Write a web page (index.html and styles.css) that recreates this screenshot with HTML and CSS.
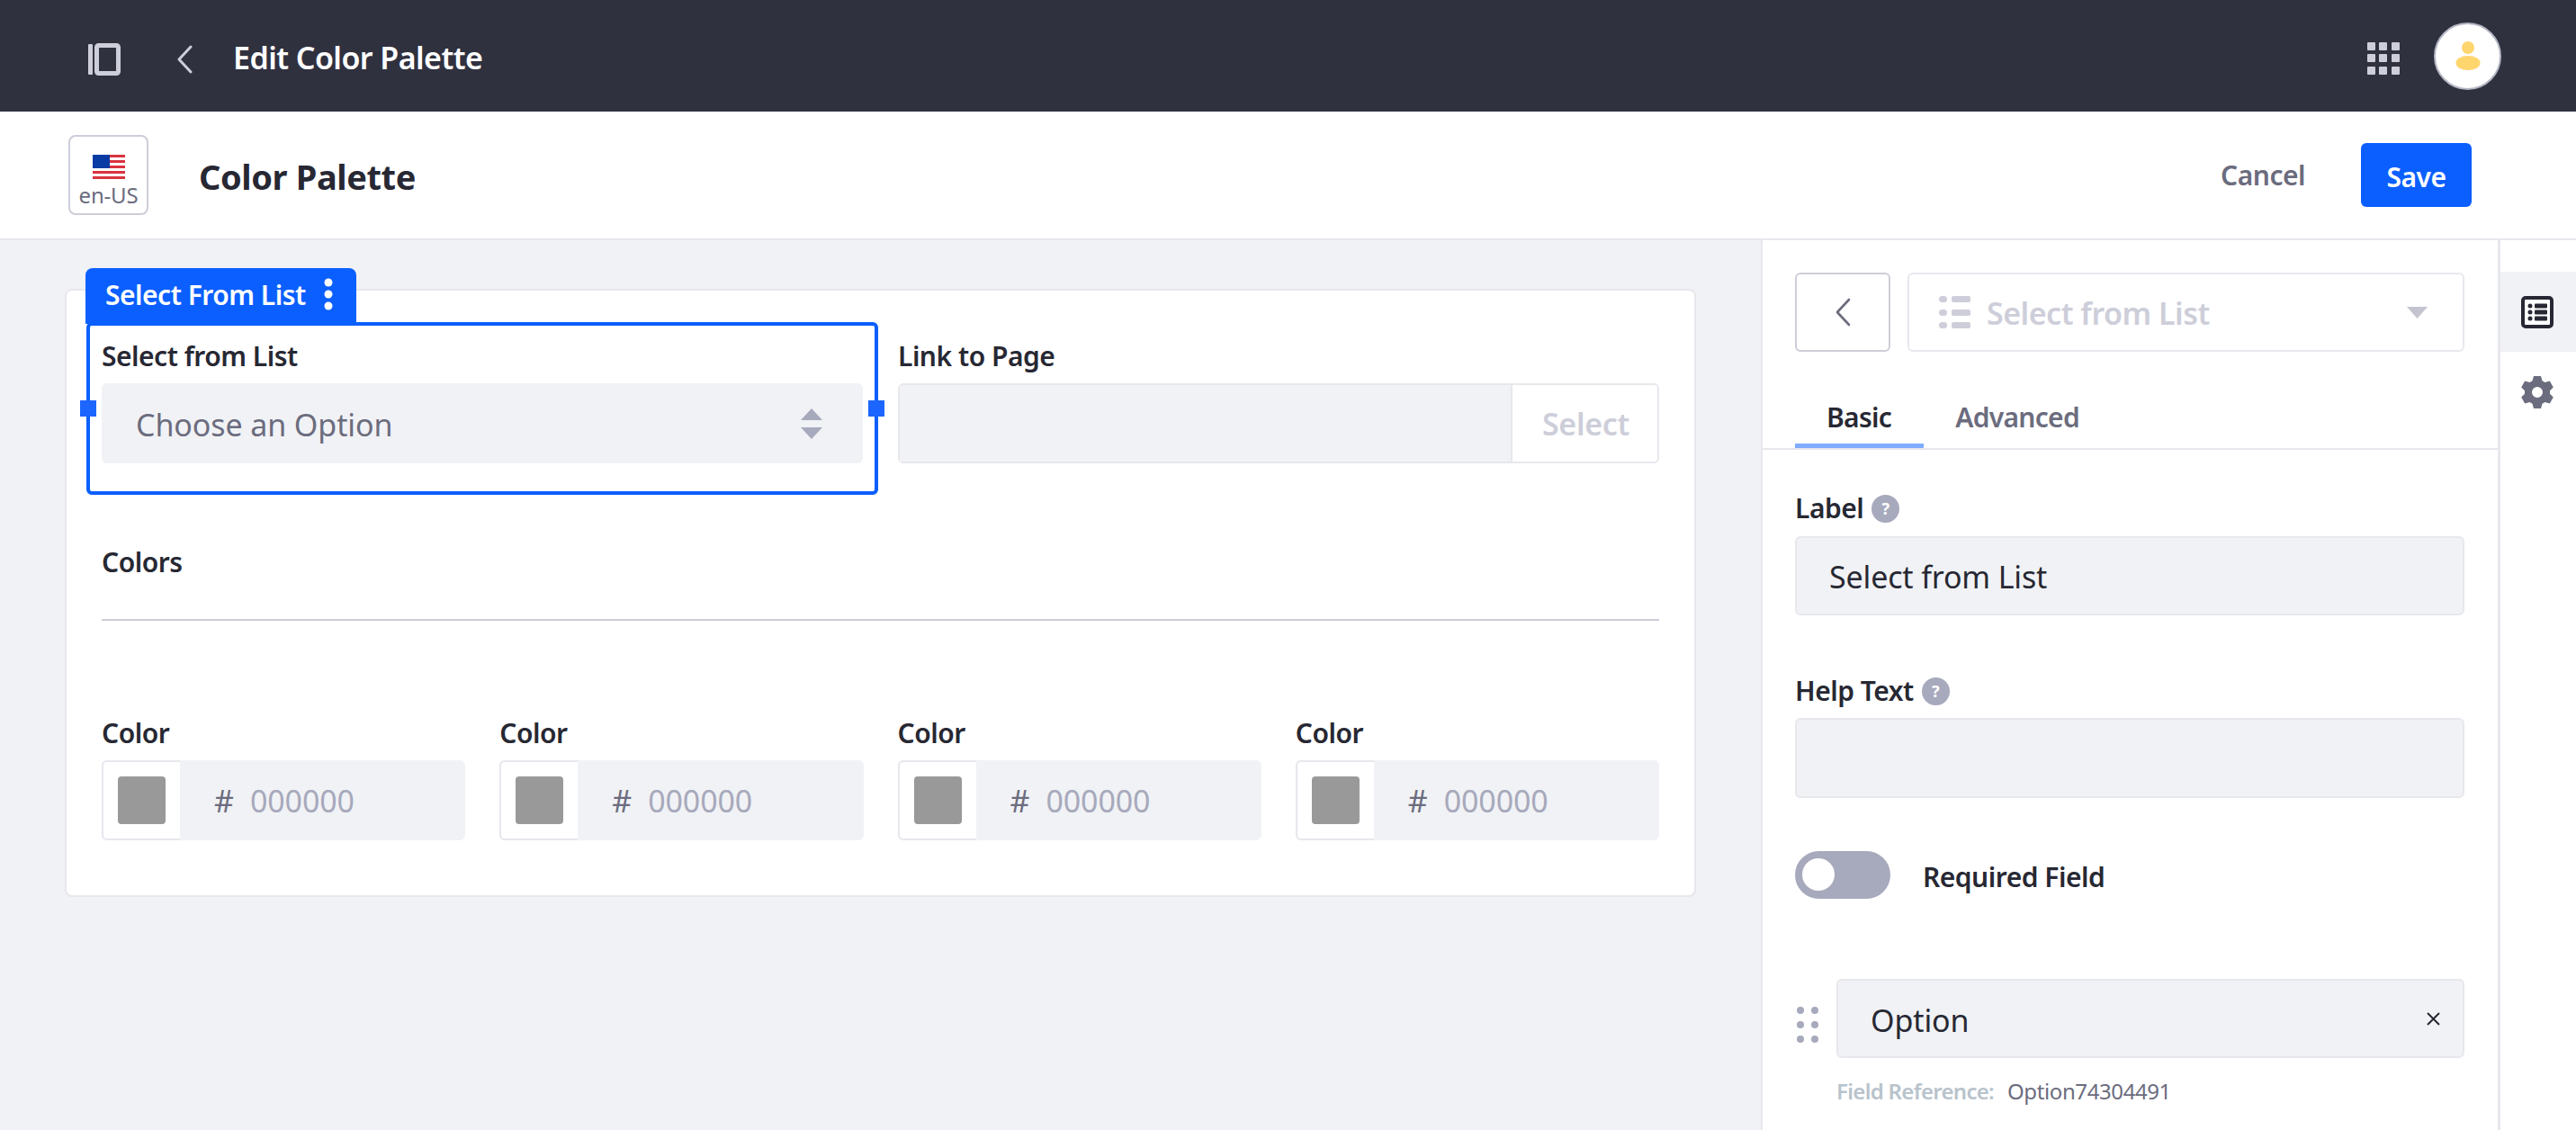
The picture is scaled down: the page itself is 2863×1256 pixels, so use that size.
FILE: index.html
```html
<!DOCTYPE html>
<html lang="en">
<head>
  <meta charset="UTF-8">
  <title>Edit Color Palette</title>
  <link rel="stylesheet" href="styles.css">
</head>
<body>

  <header class="topbar">
    <svg class="icon-panel" width="36" height="36" viewBox="0 0 36 36"><rect x="0" y="1" width="5" height="34" rx="1" fill="#cdced9"/><rect x="9.5" y="2.5" width="24" height="31" rx="2" fill="none" stroke="#cdced9" stroke-width="5"/></svg>
    <svg class="icon-back" width="18" height="32" viewBox="0 0 18 32"><path d="M16 2 L3 16 L16 30" fill="none" stroke="#cdced9" stroke-width="3" stroke-linecap="round" stroke-linejoin="round"/></svg>
    <span class="topbar-title">Edit Color Palette</span>
    <svg class="icon-grid" width="36" height="36" viewBox="0 0 36 36" fill="#cdced9">
      <rect x="0" y="0" width="9" height="9" rx="1"/><rect x="13" y="0" width="9" height="9" rx="1"/><rect x="27" y="0" width="9" height="9" rx="1"/>
      <rect x="0" y="13" width="9" height="9" rx="1"/><rect x="13" y="13" width="9" height="9" rx="1"/><rect x="27" y="13" width="9" height="9" rx="1"/>
      <rect x="0" y="27" width="9" height="9" rx="1"/><rect x="13" y="27" width="9" height="9" rx="1"/><rect x="27" y="27" width="9" height="9" rx="1"/>
    </svg>
    <div class="avatar">
      <svg width="28" height="32" viewBox="0 0 28 32" fill="#ffd56e"><circle cx="14" cy="7" r="7"/><ellipse cx="14" cy="24" rx="13.5" ry="8"/></svg>
    </div>
  </header>

  <div class="subbar">
    <div class="locale">
      <svg width="36" height="27" viewBox="0 0 36 27">
        <rect width="36" height="27" fill="#fff"/>
        <rect y="0" width="36" height="3" fill="#d9333f"/><rect y="6" width="36" height="3" fill="#d9333f"/><rect y="12" width="36" height="3" fill="#d9333f"/><rect y="18" width="36" height="3" fill="#d9333f"/><rect y="24" width="36" height="3" fill="#d9333f"/>
        <rect width="19" height="15" fill="#0a3aa3"/>
      </svg>
      <span>en-US</span>
    </div>
    <h1 class="page-title">Color Palette</h1>
    <span class="cancel">Cancel</span>
    <button class="save">Save</button>
  </div>

  <div class="workspace">
    <main class="canvas">
      <section class="card">
        <div class="row-two">
          <div class="field selected">
            <div class="frame"></div>
            <div class="frame-tab">Select From List<svg width="10" height="36" viewBox="0 0 10 36" fill="#fff"><circle cx="5" cy="5" r="4.500"/><circle cx="5" cy="18" r="4.500"/><circle cx="5" cy="31" r="4.500"/></svg></div>
            <div class="handle handle-left"></div>
            <div class="handle handle-right"></div>
            <label class="lbl">Select from List</label>
            <div class="input select-input">
              <span>Choose an Option</span>
              <svg width="24" height="34" viewBox="0 0 24 34" fill="#a7a9bc"><path d="M12 0 L24 13 H0 Z"/><path d="M0 21 H24 L12 34 Z"/></svg>
            </div>
          </div>
          <div class="field">
            <label class="lbl">Link to Page</label>
            <div class="input link-input">
              <div class="link-value"></div>
              <div class="link-btn">Select</div>
            </div>
          </div>
        </div>

        <label class="lbl colors-lbl">Colors</label>
        <hr class="colors-rule">

        <div class="row-four">
          <div class="field">
            <label class="lbl">Color</label>
            <div class="input color-input"><div class="swatch-box"><div class="swatch"></div></div><span class="hash">#</span><span class="hex">000000</span></div>
          </div>
          <div class="field">
            <label class="lbl">Color</label>
            <div class="input color-input"><div class="swatch-box"><div class="swatch"></div></div><span class="hash">#</span><span class="hex">000000</span></div>
          </div>
          <div class="field">
            <label class="lbl">Color</label>
            <div class="input color-input"><div class="swatch-box"><div class="swatch"></div></div><span class="hash">#</span><span class="hex">000000</span></div>
          </div>
          <div class="field">
            <label class="lbl">Color</label>
            <div class="input color-input"><div class="swatch-box"><div class="swatch"></div></div><span class="hash">#</span><span class="hex">000000</span></div>
          </div>
        </div>
      </section>
    </main>

    <aside class="panel">
      <div class="panel-head">
        <div class="back-btn">
          <svg width="18" height="32" viewBox="0 0 18 32"><path d="M16 2 L3 16 L16 30" fill="none" stroke="#6b6c7e" stroke-width="2.6" stroke-linecap="round" stroke-linejoin="round"/></svg>
        </div>
        <div class="type-select">
          <svg width="35" height="36" viewBox="0 0 35 36" fill="#cdced9"><rect x="0" y="0" width="9" height="7" rx="3.5"/><rect x="14" y="0" width="21" height="7" rx="2"/><rect x="0" y="15" width="9" height="7" rx="3.5"/><rect x="14" y="15" width="21" height="7" rx="2"/><rect x="0" y="29" width="9" height="7" rx="3.5"/><rect x="14" y="29" width="21" height="7" rx="2"/></svg>
          <span class="type-name">Select from List</span>
          <svg width="23" height="13" viewBox="0 0 23 13" fill="#c3c4cf"><path d="M0 0 H23 L11.5 13 Z"/></svg>
        </div>
      </div>

      <nav class="tabs">
        <span class="tab active">Basic</span>
        <span class="tab">Advanced</span>
      </nav>

      <div class="panel-form">
        <label class="lbl lbl-help">Label <i class="help">?</i></label>
        <div class="input text-input">Select from List</div>

        <label class="lbl lbl-help help-text-lbl">Help Text <i class="help">?</i></label>
        <div class="input text-input help-input"></div>

        <div class="toggle-row">
          <div class="toggle"><div class="knob"></div></div>
          <span class="lbl toggle-lbl">Required Field</span>
        </div>

        <div class="option-row">
          <svg class="drag" width="24" height="40" viewBox="0 0 24 40" fill="#a7a9bc"><circle cx="4" cy="4" r="4"/><circle cx="20" cy="4" r="4"/><circle cx="4" cy="20" r="4"/><circle cx="20" cy="20" r="4"/><circle cx="4" cy="36" r="4"/><circle cx="20" cy="36" r="4"/></svg>
          <div class="input option-input">
            <span>Option</span>
            <svg width="17" height="17" viewBox="0 0 17 17"><path d="M2 2 L15 15 M15 2 L2 15" stroke="#272833" stroke-width="2" fill="none"/></svg>
          </div>
        </div>
        <div class="field-ref"><b>Field Reference:</b><span>Option74304491</span></div>
      </div>
    </aside>

    <nav class="rail">
      <div class="rail-item active">
        <svg width="36" height="36" viewBox="0 0 36 36"><rect x="2" y="2" width="32" height="32" rx="3" fill="#fff" stroke="#272833" stroke-width="4"/><g fill="#272833"><circle cx="10" cy="11" r="2.5"/><rect x="15" y="8.5" width="14" height="5" rx="1"/><circle cx="10" cy="18" r="2.5"/><rect x="15" y="15.5" width="14" height="5" rx="1"/><circle cx="10" cy="25" r="2.5"/><rect x="15" y="22.5" width="14" height="5" rx="1"/></g></svg>
      </div>
      <div class="rail-item">
        <svg width="36" height="36" viewBox="0 0 36 36"><path fill="#6b6c7e" fill-rule="evenodd" d="M14 0 H22 L23.5 5.2 L26.5 6.9 L31.8 5.6 L35.8 12.4 L32 16.3 V19.7 L35.8 23.6 L31.8 30.4 L26.5 29.1 L23.5 30.8 L22 36 H14 L12.500 30.8 L9.5 29.1 L4.2 30.400 L0.2 23.6 L4 19.700 V16.3 L0.2 12.4 L4.2 5.600 L9.5 6.9 L12.5 5.2 Z M18 12 A6 6 0 1 0 18 24 A6 6 0 1 0 18 12 Z"/></svg>
      </div>
    </nav>
  </div>

</body>
</html>
```

FILE: styles.css
```css
* { box-sizing: border-box; }
html, body { margin: 0; height: 1256px; overflow: hidden; }
body { font-family: "Noto Sans", "Open Sans", sans-serif; background-color: #f1f2f5; color: #272833; }

.topbar { height: 124px; background-color: #30313f; display: flex; align-items: center; padding: 0 83px 0 98px; }
.icon-panel { margin-top: 8px; }
.icon-back { margin: 8px 0 0 62px; }
.topbar-title { margin: 4px 0 0 45px; color: #fff; font-size: 34px; font-weight: 600; letter-spacing: -0.55px; }
.icon-grid { margin: 6px 0 0 auto; }
.avatar { width: 75px; height: 75px; margin-left: 38px; border-radius: 50%; background-color: #fff; border: 2px solid #b5b6c4; display: flex; align-items: center; justify-content: center; }

.subbar { height: 143px; background-color: #fff; border-bottom: 2px solid #e7e7ed; display: flex; align-items: center; padding: 0 116px 0 76px; }
.locale { width: 89px; height: 89px; border: 2px solid #cdced9; border-radius: 8px; display: flex; flex-direction: column; align-items: center; padding-top: 20px; }
.locale span { font-size: 24px; line-height: 30px; color: #6b6c7e; margin-top: 3px; letter-spacing: -0.2px; }
.page-title { margin: 2px 0 0 56px; font-size: 38px; font-weight: 700; letter-spacing: -0.4px; }
.cancel { margin-left: auto; color: #6b6c7e; font-size: 30px; font-weight: 600; letter-spacing: -0.5px; }
.save { margin-left: 62px; width: 123px; height: 71px; border: none; border-radius: 6px; background-color: #0b5fff; color: #fff; font-family: inherit; font-size: 30px; font-weight: 600; letter-spacing: -0.5px; padding: 3px 0 0; }

.workspace { display: flex; height: 989px; }
.canvas { width: 1957px; padding: 54px 0 0 72px; }
.card { width: 1813px; height: 676px; background-color: #fff; border: 2px solid #e7e7ed; border-radius: 8px; padding: 53px 39px 0 39px; }

.lbl { display: block; height: 40px; line-height: 40px; font-size: 30px; font-weight: 600; letter-spacing: -0.5px; color: #272833; margin-bottom: 10px; }
.input { background-color: #f1f2f5; border: 2px solid #e7e7ed; border-radius: 6px; height: 89px; font-size: 34px; letter-spacing: -0.1px; }

.row-two { display: grid; grid-template-columns: 1fr 1fr; column-gap: 39px; }
.row-four { display: grid; grid-template-columns: repeat(4, 1fr); column-gap: 38px; margin-top: 105px; }

.selected { position: relative; }
.frame { position: absolute; left: -17px; right: -17px; top: -18px; bottom: -35px; border: 4px solid #0b5fff; border-radius: 6px; }
.frame-tab { position: absolute; left: -18px; top: -78px; width: 301px; height: 62px; background-color: #0b5fff; border-radius: 8px 8px 0 0; color: #fff; font-size: 30px; font-weight: 600; letter-spacing: -0.5px; display: flex; align-items: center; justify-content: space-between; padding: 0 26px 4px 22px; }
.handle { position: absolute; top: 69px; width: 18px; height: 18px; background-color: #1c66ff; }
.handle-left { left: -24px; }
.handle-right { right: -24px; }

.select-input { border: none; display: flex; align-items: center; justify-content: space-between; padding: 0 45px 0 38px; color: #6b6c7e; position: relative; }
.select-input span { margin-top: 2px; }
.link-input { display: flex; background-color: #fff; }
.link-value { flex: 1; background-color: #f1f2f5; border-right: 2px solid #e7e7ed; }
.link-btn { width: 161px; display: flex; align-items: center; justify-content: center; color: #cdced9; font-weight: 600; letter-spacing: -0.3px; padding-left: 2px; }

.colors-lbl { margin: 90px 0 0; }
.colors-rule { margin: 43px 0 0; border: none; height: 2px; background-color: #cdced9; }

.color-input { display: flex; align-items: center; border: none; }
.swatch-box { width: 87px; height: 100%; background-color: #fff; border: 2px solid #e7e7ed; border-right: none; border-radius: 6px 0 0 6px; display: flex; align-items: center; padding-left: 16px; }
.swatch { width: 53px; height: 53px; background-color: #999; border-radius: 4px; }
.hash { margin-left: 38px; color: #6b6c7e; }
.hex { margin-left: 18px; color: #a7a9bc; }

.panel { width: 822px; background-color: #fff; border-left: 2px solid #e7e7ed; border-right: 3px solid #e7e7ed; padding-top: 36px; }
.panel-head { display: flex; gap: 19px; padding: 0 37px 0 36px; }
.back-btn { width: 106px; height: 88px; border: 2px solid #cdced9; border-radius: 6px; display: flex; align-items: center; justify-content: center; }
.type-select { flex: 1; height: 88px; border: 2px solid #e7e7ed; border-radius: 6px; display: flex; align-items: center; padding: 0 39px 0 33px; color: #cdced9; font-size: 34px; font-weight: 600; letter-spacing: -0.5px; }
.type-name { margin: 2px auto 0 18px; }

.tabs { display: flex; margin-top: 43px; padding-left: 36px; border-bottom: 2px solid #e7e7ed; height: 66px; }
.tab { height: 64px; padding: 0 36px 0 35px; font-size: 30px; font-weight: 600; letter-spacing: -0.7px; color: #6b6c7e; line-height: 60px; }
.tab.active { color: #272833; border-bottom: 5px solid #80acff; }

.panel-form { padding: 45px 37px 0 36px; }
.lbl-help { display: flex; align-items: center; gap: 9px; margin-bottom: 11px; }
.help { width: 31px; height: 31px; border-radius: 50%; background-color: #a7a9bc; color: #fff; font-size: 18px; font-style: normal; font-weight: 700; display: flex; align-items: center; justify-content: center; letter-spacing: 0; }
.help-text-lbl { margin: 64px 0 10px; }
.text-input { height: 88px; display: flex; align-items: center; padding: 2px 0 0 36px; letter-spacing: -0.15px; }
.help-input { height: 89px; }

.toggle-row { display: flex; align-items: center; margin-top: 59px; height: 53px; }
.toggle { width: 106px; height: 53px; border-radius: 27px; background-color: #a7a9bc; padding: 8px 0 0 8px; }
.knob { width: 36px; height: 36px; border-radius: 50%; background-color: #fff; }
.toggle-lbl { margin: 4px 0 0 36px; }

.option-row { display: flex; align-items: center; gap: 20px; margin-top: 89px; padding-left: 2px; }
.drag { margin-top: 14px; }
.option-input { flex: 1; height: 88px; display: flex; align-items: center; justify-content: space-between; padding: 0 24px 0 36px; }
.option-input span { margin-top: 4px; }
.field-ref { margin: 20px 0 0 46px; font-size: 24px; letter-spacing: -0.4px; color: #6b6c7e; display: flex; gap: 15px; }
.field-ref b { color: #b8c3cc; font-weight: 600; letter-spacing: -0.7px; }

.rail { flex: 1; background-color: #fff; padding-top: 35px; }
.rail-item { height: 89px; display: flex; align-items: center; padding-left: 23px; }
.rail-item.active { background-color: #f1f2f5; }
```
